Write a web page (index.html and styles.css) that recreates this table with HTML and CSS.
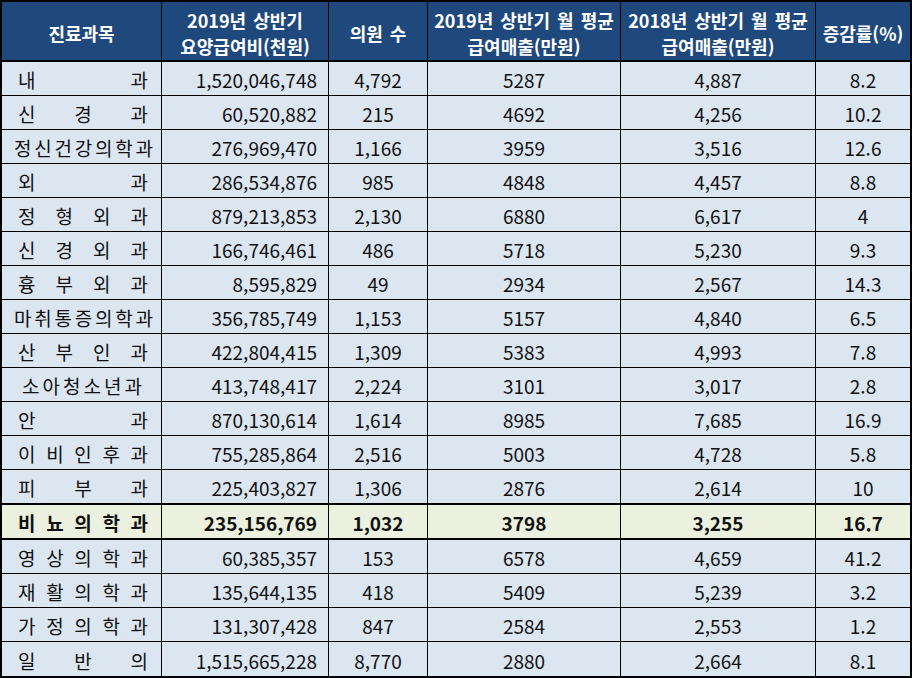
FILE: index.html
```html
<!DOCTYPE html>
<html lang="ko">
<head>
<meta charset="utf-8">
<title>진료과목별 급여매출</title>
<link rel="stylesheet" href="styles.css">
</head>
<body>
<table class="sheet">
  <thead>
    <tr>
      <th class="c1">진료과목</th>
      <th class="c2">2019년 상반기<br>요양급여비(천원)</th>
      <th class="c3">의원 수</th>
      <th class="c4">2019년 상반기 월 평균<br>급여매출(만원)</th>
      <th class="c5">2018년 상반기 월 평균<br>급여매출(만원)</th>
      <th class="c6">증감률(%)</th>
    </tr>
  </thead>
  <tbody>
    <tr><td class="name"><div class="dist"><span>내</span><span>과</span></div></td><td class="num">1,520,046,748</td><td>4,792</td><td>5287</td><td>4,887</td><td>8.2</td></tr>
    <tr><td class="name"><div class="dist"><span>신</span><span>경</span><span>과</span></div></td><td class="num">60,520,882</td><td>215</td><td>4692</td><td>4,256</td><td>10.2</td></tr>
    <tr><td class="name long"><div class="dist"><span>정</span><span>신</span><span>건</span><span>강</span><span>의</span><span>학</span><span>과</span></div></td><td class="num">276,969,470</td><td>1,166</td><td>3959</td><td>3,516</td><td>12.6</td></tr>
    <tr><td class="name"><div class="dist"><span>외</span><span>과</span></div></td><td class="num">286,534,876</td><td>985</td><td>4848</td><td>4,457</td><td>8.8</td></tr>
    <tr><td class="name"><div class="dist"><span>정</span><span>형</span><span>외</span><span>과</span></div></td><td class="num">879,213,853</td><td>2,130</td><td>6880</td><td>6,617</td><td>4</td></tr>
    <tr><td class="name"><div class="dist"><span>신</span><span>경</span><span>외</span><span>과</span></div></td><td class="num">166,746,461</td><td>486</td><td>5718</td><td>5,230</td><td>9.3</td></tr>
    <tr><td class="name"><div class="dist"><span>흉</span><span>부</span><span>외</span><span>과</span></div></td><td class="num">8,595,829</td><td>49</td><td>2934</td><td>2,567</td><td>14.3</td></tr>
    <tr><td class="name long"><div class="dist"><span>마</span><span>취</span><span>통</span><span>증</span><span>의</span><span>학</span><span>과</span></div></td><td class="num">356,785,749</td><td>1,153</td><td>5157</td><td>4,840</td><td>6.5</td></tr>
    <tr><td class="name"><div class="dist"><span>산</span><span>부</span><span>인</span><span>과</span></div></td><td class="num">422,804,415</td><td>1,309</td><td>5383</td><td>4,993</td><td>7.8</td></tr>
    <tr><td class="name six"><div class="dist"><span>소</span><span>아</span><span>청</span><span>소</span><span>년</span><span>과</span></div></td><td class="num">413,748,417</td><td>2,224</td><td>3101</td><td>3,017</td><td>2.8</td></tr>
    <tr><td class="name"><div class="dist"><span>안</span><span>과</span></div></td><td class="num">870,130,614</td><td>1,614</td><td>8985</td><td>7,685</td><td>16.9</td></tr>
    <tr><td class="name"><div class="dist"><span>이</span><span>비</span><span>인</span><span>후</span><span>과</span></div></td><td class="num">755,285,864</td><td>2,516</td><td>5003</td><td>4,728</td><td>5.8</td></tr>
    <tr><td class="name"><div class="dist"><span>피</span><span>부</span><span>과</span></div></td><td class="num">225,403,827</td><td>1,306</td><td>2876</td><td>2,614</td><td>10</td></tr>
    <tr class="hl"><td class="name"><div class="dist"><span>비</span><span>뇨</span><span>의</span><span>학</span><span>과</span></div></td><td class="num">235,156,769</td><td>1,032</td><td>3798</td><td>3,255</td><td>16.7</td></tr>
    <tr><td class="name"><div class="dist"><span>영</span><span>상</span><span>의</span><span>학</span><span>과</span></div></td><td class="num">60,385,357</td><td>153</td><td>6578</td><td>4,659</td><td>41.2</td></tr>
    <tr><td class="name"><div class="dist"><span>재</span><span>활</span><span>의</span><span>학</span><span>과</span></div></td><td class="num">135,644,135</td><td>418</td><td>5409</td><td>5,239</td><td>3.2</td></tr>
    <tr><td class="name"><div class="dist"><span>가</span><span>정</span><span>의</span><span>학</span><span>과</span></div></td><td class="num">131,307,428</td><td>847</td><td>2584</td><td>2,553</td><td>1.2</td></tr>
    <tr class="last"><td class="name"><div class="dist"><span>일</span><span>반</span><span>의</span></div></td><td class="num">1,515,665,228</td><td>8,770</td><td>2880</td><td>2,664</td><td>8.1</td></tr>
  </tbody>
</table>
</body>
</html>
```

FILE: styles.css
```css
html, body {
  margin: 0;
  padding: 0;
  background: #ffffff;
}

.sheet {
  width: 912px;
  box-sizing: border-box;
  border: 2px solid #000;
  border-collapse: separate;
  border-spacing: 0;
  table-layout: fixed;
  font-family: "Noto Sans CJK KR", "Noto Sans", sans-serif;
  color: #111;
}

.sheet th,
.sheet td {
  box-sizing: border-box;
  padding: 0;
  border-right: 1px solid #000;
  border-bottom: 1px solid #000;
  text-align: center;
  vertical-align: middle;
}

.sheet th:last-child,
.sheet td:last-child {
  border-right: none;
}

.sheet th {
  height: 60px;
  background: #1f497d;
  color: #ffffff;
  font-weight: 700;
  font-size: 18px;
  line-height: 26px;
  word-spacing: 2px;
  border-bottom: 2px solid #000;
  padding-top: 4px;
  white-space: nowrap;
}

.c1 { width: 160px; }
.c2 { width: 167px; }
.c3 { width: 99px; }
.c4 { width: 193px; }
.c5 { width: 195px; }
.c6 { width: 94px; }

.sheet td {
  height: 34px;
  background: #dce6f1;
  font-size: 19px;
  line-height: 24px;
  padding-top: 3px;
  white-space: nowrap;
}

.sheet td.num {
  text-align: right;
  padding-right: 11px;
}

.sheet td.name {
  padding-left: 16px;
  padding-right: 13px;
}

.sheet td.name.long {
  padding-left: 12px;
  padding-right: 8px;
}

.sheet td.name.six {
  padding-left: 20px;
  padding-right: 19px;
}

.dist {
  display: flex;
  justify-content: space-between;
}

.sheet tr.hl td {
  background: #ebf1de;
  font-weight: 700;
  border-top: 1px solid #000;
  border-bottom: 2px solid #000;
  height: 36px;
}

.sheet tr.last td {
  border-bottom: none;
}
```
